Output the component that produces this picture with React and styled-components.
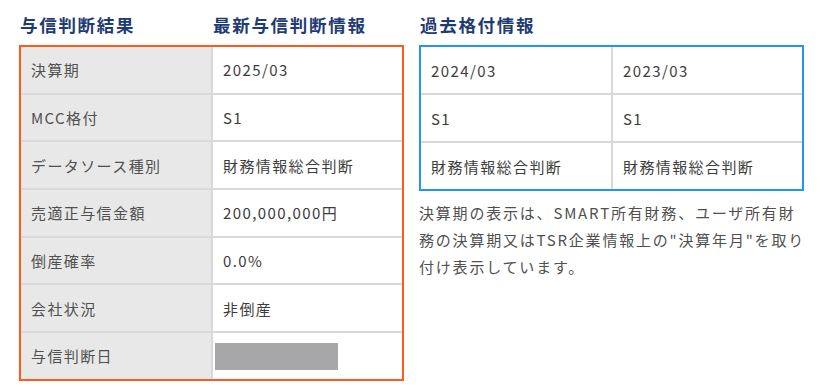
import React from "react";
import styled, { createGlobalStyle } from "styled-components";

const Global = createGlobalStyle`
  html, body { margin: 0; padding: 0; background: #ffffff; }
  body { font-family: "Noto Sans CJK JP", "Noto Sans", sans-serif; }
`;

const Page = styled.div`
  display: flex;
  align-items: flex-start;
  gap: 15px;
  padding: 12px 0 0 19px;
  width: 822px;
  height: 387px;
  box-sizing: border-box;
`;

const Section = styled.section`
  width: 385px;
  display: flex;
  flex-direction: column;
`;

const HeadRow = styled.div`
  display: grid;
  grid-template-columns: ${(p) => (p.$split ? "193px 1fr" : "1fr")};
  margin-bottom: 8px;
`;

const Heading = styled.h2`
  margin: 0;
  padding-left: 1px;
  font-size: 17.5px;
  line-height: 25px;
  font-weight: 700;
  letter-spacing: 1.7px;
  color: #1f3b74;
`;

const Box = styled.div`
  display: grid;
  grid-template-columns: ${(p) => p.$cols};
  grid-auto-rows: ${(p) => p.$row}px;
  gap: 2px;
  background: #d9d9d9;
  border: 2px solid ${(p) => p.$accent};
`;

const Cell = styled.div`
  display: flex;
  align-items: center;
  padding: 0 10px;
  background: ${(p) => (p.$label ? "#e8e8e8" : "#ffffff")};
  color: ${(p) => (p.$label ? "#505050" : "#3c3c3c")};
  font-size: 15px;
  letter-spacing: 1.4px;
  white-space: nowrap;
`;

const Mask = styled.div`
  width: 123px;
  height: 27px;
  margin-left: -8px;
  margin-top: 2px;
  background: #a7a7a9;
`;

const Note = styled.p`
  margin: 8px 0 0;
  width: 410px;
  font-size: 15px;
  line-height: 27px;
  letter-spacing: 1.8px;
  color: #505050;
  white-space: nowrap;
`;

const latest = [
  ["決算期", "2025/03"],
  ["MCC格付", "S1"],
  ["データソース種別", "財務情報総合判断"],
  ["売適正与信金額", "200,000,000円"],
  ["倒産確率", "0.0%"],
  ["会社状況", "非倒産"],
  ["与信判断日", null],
];

const past = [
  ["2024/03", "2023/03"],
  ["S1", "S1"],
  ["財務情報総合判断", "財務情報総合判断"],
];

export default function App() {
  return (
    <>
      <Global />
      <Page>
        <Section>
          <HeadRow $split>
            <Heading>与信判断結果</Heading>
            <Heading>最新与信判断情報</Heading>
          </HeadRow>
          <Box $accent="#ff5c1c" $cols="190px 1fr" $row={45.7}>
            {latest.map(([label, value]) => (
              <React.Fragment key={label}>
                <Cell $label>{label}</Cell>
                <Cell>{value === null ? <Mask /> : value}</Cell>
              </React.Fragment>
            ))}
          </Box>
        </Section>
        <Section>
          <HeadRow>
            <Heading>過去格付情報</Heading>
          </HeadRow>
          <Box $accent="#2196f3" $cols="190px 1fr" $row={46}>
            {past.map((row, i) =>
              row.map((v, j) => <Cell key={`${i}-${j}`}>{v}</Cell>)
            )}
          </Box>
          <Note>
            決算期の表示は、SMART所有財務、ユーザ所有財
            <br />
            務の決算期又はTSR企業情報上の"決算年月"を取り
            <br />
            付け表示しています。
          </Note>
        </Section>
      </Page>
    </>
  );
}
